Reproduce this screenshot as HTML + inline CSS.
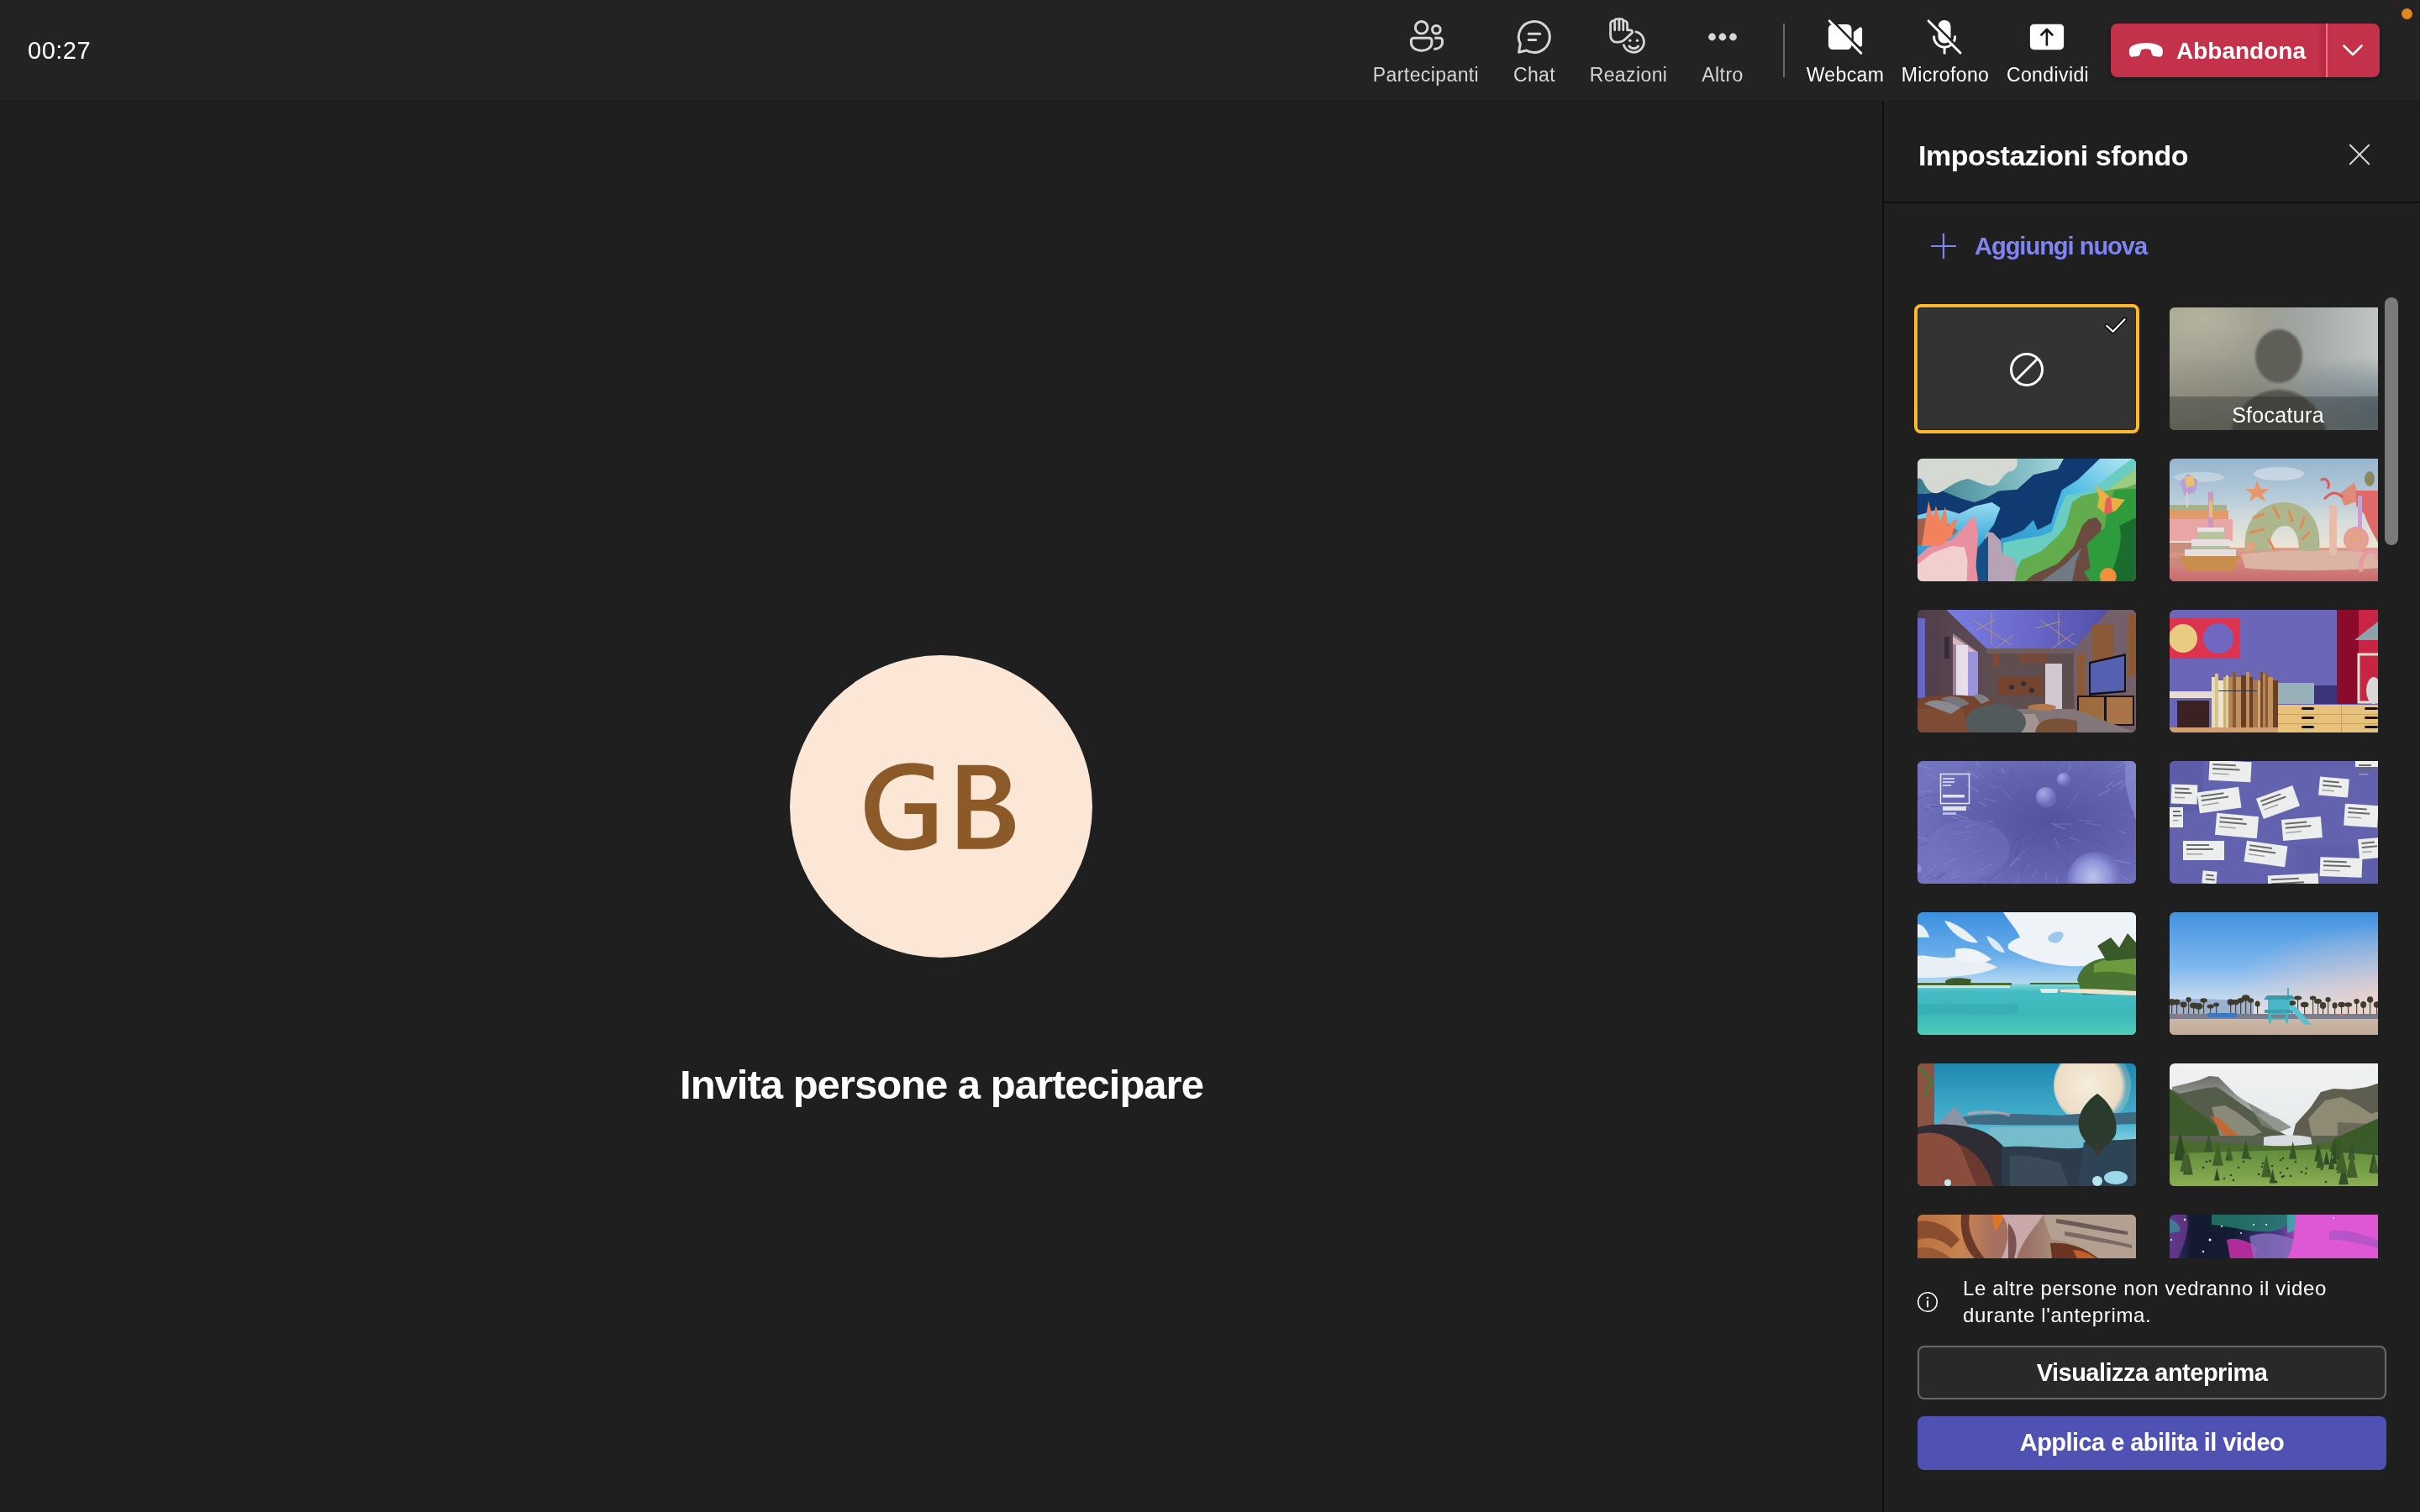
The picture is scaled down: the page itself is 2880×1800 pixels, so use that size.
<!DOCTYPE html>
<html><head><meta charset="utf-8">
<style>
*{margin:0;padding:0;box-sizing:border-box}
html,body{width:2880px;height:1800px;overflow:hidden;background:#1f1f1f;font-family:"Liberation Sans",sans-serif;color:#fff}
.a{position:absolute}
.t{position:absolute;white-space:nowrap;line-height:1;will-change:transform}
#top{left:0;top:0;width:2880px;height:120px;background:#232323;border-bottom:1px solid #1a1a1a;height:121px}
.lbl{font-size:23px;letter-spacing:0.4px;color:#d6d6d6;text-align:center;width:200px;top:77.5px}
.ic{position:absolute}
#panel{left:2240px;top:121px;width:640px;height:1679px;background:#1f1f1f;border-left:2px solid #0e0e0e}
.tile{position:absolute;width:260px;height:146px;border-radius:6px;overflow:hidden}
</style></head><body>
<div id="top" class="a"></div>
<div class="t" id="timer" style="left:33px;top:46px;font-size:29px;letter-spacing:0.5px;color:#fff">00:27</div>

<!-- toolbar labels -->
<div class="t lbl" style="left:1597px;">Partecipanti</div>
<div class="t lbl" style="left:1726px;">Chat</div>
<div class="t lbl" style="left:1838px;">Reazioni</div>
<div class="t lbl" style="left:1950px;">Altro</div>
<div class="a" style="left:2122px;top:28px;width:2px;height:64px;background:#6b6b6b"></div>
<div class="t lbl" style="left:2096px;color:#fff">Webcam</div>
<div class="t lbl" style="left:2215px;color:#fff">Microfono</div>
<div class="t lbl" style="left:2337px;color:#fff">Condividi</div>

<!-- leave button -->
<div class="a" style="left:2512px;top:28px;width:320px;height:64px;background:#c4314b;border-radius:8px;box-shadow:0 2px 6px rgba(0,0,0,.35)"></div>
<div class="a" style="left:2758px;top:28px;width:10px;height:64px;background:linear-gradient(90deg,rgba(0,0,0,0),rgba(0,0,0,.12))"></div><div class="a" style="left:2768px;top:28px;width:2px;height:64px;background:#fd6a80"></div>
<div class="t" style="left:2590px;top:46.5px;font-size:28px;font-weight:bold;color:#fff">Abbandona</div>
<div class="a" style="left:2858px;top:10px;width:13px;height:13px;border-radius:50%;background:#e0861e"></div>

<!-- main -->
<div class="a" style="left:940px;top:780px;width:360px;height:360px;border-radius:50%;background:#fce7d7"></div>
<svg class="a" style="left:1020px;top:900px" width="200" height="120" viewBox="0 0 200 120">
<path fill="#8c5a28" fill-rule="evenodd" d="M90.9 12.4C83 9.5 74 8.3 65 8.3C32 8.3 9.1 29 9.1 60.5C9.1 91 29 112.4 59 112.4C73 112.4 85 109 94.6 103.3V56.2H56.6V69H78.1V94.2C73 97.3 66 98.8 60 98.8C39 98.8 26.4 83 26.4 60.5C26.4 37 42 22.3 65 22.3C75 22.3 84 25 90.9 28.9Z
M119.8 10.7H150C170 10.7 182.6 20 182.6 35C182.6 47 174 55 164 57.5C178 59.5 188 69 188 83C188 100 174 110.7 152 110.7H119.8Z
M135.5 23.1V52H149C159 52 165.3 47 165.3 37.5C165.3 28 159 23.1 149 23.1Z
M135.5 65.3V97.5H152C163 97.5 169.8 92 169.8 81.4C169.8 71 162 65.3 150 65.3Z"/>
</svg>
<div class="t" style="left:720px;top:1266.8px;width:801px;text-align:center;font-size:49px;letter-spacing:-1px;font-weight:bold">Invita persone a partecipare</div>

<!-- panel -->
<div id="panel" class="a"></div>
<div class="a" style="left:2240px;top:240px;width:640px;height:2px;background:#0e0e0e"></div>
<div class="t" style="left:2283px;top:167.5px;font-size:34px;letter-spacing:-0.5px;font-weight:bold">Impostazioni sfondo</div>
<div class="t" style="left:2350px;top:279.4px;font-size:29px;letter-spacing:-1px;font-weight:bold;color:#7f85f5">Aggiungi nuova</div>

<div class="a" style="left:2270px;top:340px;width:560px;height:1158px;overflow:hidden">
<!-- selected none tile -->
<div class="a" style="left:8px;top:22px;width:268px;height:154px;border:4px solid #fcb92c;border-radius:8px;background:#333;box-shadow:inset 0 0 0 1px #222633"></div>
<!-- Sfocatura -->
<div class="tile" style="left:312px;top:26px">
<svg width="260" height="146" viewBox="0 0 260 146" preserveAspectRatio="none">
<defs>
<linearGradient id="bl1" x1="0" y1="0" x2="1" y2="0"><stop offset="0" stop-color="#a6a392"/><stop offset=".4" stop-color="#9a9b8e"/><stop offset=".65" stop-color="#a2a9a8"/><stop offset="1" stop-color="#c6cac6"/></linearGradient>
<linearGradient id="bl2" x1="0" y1="0" x2="0" y2="1"><stop offset="0" stop-color="#000" stop-opacity="0"/><stop offset=".4" stop-color="#000" stop-opacity="0"/><stop offset="1" stop-color="#283020" stop-opacity=".3"/></linearGradient>
<radialGradient id="bl3" cx=".95" cy=".85" r=".45"><stop offset="0" stop-color="#7890a0" stop-opacity=".85"/><stop offset="1" stop-color="#7890a0" stop-opacity="0"/></radialGradient>
<radialGradient id="bl4" cx=".15" cy=".1" r=".35"><stop offset="0" stop-color="#b8b4a2" stop-opacity=".9"/><stop offset="1" stop-color="#b8b4a2" stop-opacity="0"/></radialGradient>
<filter id="bf" x="-20%" y="-20%" width="140%" height="140%"><feGaussianBlur stdDeviation="1.6"/></filter>
</defs>
<rect width="260" height="146" fill="url(#bl1)"/>
<rect width="260" height="146" fill="url(#bl4)"/>
<rect width="260" height="146" fill="url(#bl3)"/>
<rect width="260" height="146" fill="url(#bl2)"/>
<g filter="url(#bf)">
<ellipse cx="130" cy="58" rx="28" ry="32" fill="#5e5f58"/>
<ellipse cx="130" cy="158" rx="57" ry="60" fill="#56564f"/>
</g>
<rect y="106" width="260" height="40" fill="#1a1c1c" fill-opacity=".32"/>
</svg>
<div class="t" style="left:-1px;top:115.6px;width:260px;text-align:center;font-size:25px;letter-spacing:0.3px;color:#fff">Sfocatura</div>
</div>

<!-- A: nature illustration -->
<div class="tile" style="left:12px;top:206px">
<svg width="260" height="146" viewBox="0 0 260 146">
<defs>
<linearGradient id="ta1" x1="0" y1="0" x2="1" y2="0"><stop offset="0" stop-color="#3a7c8c"/><stop offset=".5" stop-color="#6aaab4"/><stop offset="1" stop-color="#a6d6dc"/></linearGradient>
<linearGradient id="ta2" x1="0" y1="1" x2="1" y2="0"><stop offset="0" stop-color="#2a90c8"/><stop offset=".6" stop-color="#48b8e4"/><stop offset="1" stop-color="#b8e8f2"/></linearGradient>
<linearGradient id="ta3" x1="0" y1="0" x2="0" y2="1"><stop offset="0" stop-color="#98dcf0"/><stop offset=".5" stop-color="#3aa8dc"/><stop offset="1" stop-color="#1a6aa0"/></linearGradient>
</defs>
<rect width="260" height="146" fill="#0f3a72"/>
<path d="M0 0H174L167 12.6L138 19.3L118.6 36.7L96.4 38.6L80.8 47.5L67.4 52L51.8 47.5L29.5 38.6L10.5 42L0 42Z" fill="url(#ta1)"/>
<path d="M0 0H118C120 6 118 13 112 15C104 16 102 22 97 28C92 33 86 33 80 31C74 30 68 26 60 24C52 25 46 28 38 33C30 38 26 42 20 41C14 40 10 34 7 28C5 24 2 22 0 24Z" fill="#d5d9d4"/>
<path d="M217 0L191 25L171.7 37.6L164 60L159 77L142.8 85L138 73L126 85L109 92.7L99 95L99 146H260V0Z" fill="url(#ta2)"/>
<path d="M255 0L205.5 38L176.6 43.5L167 65L160 87L147.6 91.8L118.6 96.6L102 100L100 146H260V0Z" fill="#6acdc2"/>
<path d="M260 12L225 38L196 44L184 52L176.6 80L167 92L147.6 110L123.5 120.7L113.8 140L112.8 146H260Z" fill="#62ac4e"/>
<path d="M260 12L225 38L250 34L260 30Z" fill="#9ccc84"/>
<path d="M219 78L213 70L203.6 72L196 80L186 105L167 125L138 138L128 146H214L213 120L217 100Z" fill="#6b4a3f"/>
<path d="M195 106L176.6 125L147.6 146H184L189 122Z" fill="#6f7a82"/>
<path d="M234.5 37L225 65L223 82L201.7 101L205.5 130L198 135L205.5 146H260V36Z" fill="#2e9c3c"/>
<path d="M240 80L260 70V146H228C236 120 246 100 240 80Z" fill="#1c6c2e"/>
<path d="M212 32L230 46L247 49L236 62L224 66L214 58L216 46Z" fill="#e8b03e"/>
<path d="M224 48L230 44L232 64L222 66Z" fill="#e2605a"/>
<circle cx="226.8" cy="140" r="10" fill="#f0903a"/>
<path d="M80 87L89.7 88L99.3 98L101 114L113.8 118L118.6 128L115.7 146H80Z" fill="#b6a4b6"/>
<path d="M0 67.6L18.3 62L35 61L49.5 65.4L68.5 56.5L88.6 52L98.6 58.7L90.8 78.5L80.8 92L76.3 105.5L74 122L65 146H0Z" fill="url(#ta3)"/>
<path d="M70 108L84 92L84 146H66Z" fill="#164e86"/>
<path d="M0 72L20 70L40 80L48 86L30 100L0 104Z" fill="#a06050"/>
<path d="M0 116.7L12.7 105.5L40.6 96.6L54 83L63 70.9L69.6 69.8L72 94.4L69.6 127.8L72 146H0Z" fill="#e8909f"/>
<path d="M0 125.6L18.3 112L40.6 104L56 105.5L59.6 122L58.5 146H0Z" fill="#f1cfcf"/>
<path d="M5 104L9 78L13 50L18 70L22 56L27 74L33 57L36 80L48 70L40 94L26 104Z" fill="#f2825c"/>
</svg>
</div>

<!-- B: candy land -->
<div class="tile" style="left:312px;top:206px">
<svg width="260" height="146" viewBox="0 0 260 146">
<defs><linearGradient id="cb1" x1="0" y1="0" x2="0" y2="1"><stop offset="0" stop-color="#96b6ce"/><stop offset=".3" stop-color="#b4cad8"/><stop offset=".5" stop-color="#d4dcdc"/><stop offset=".72" stop-color="#ece4d4"/><stop offset="1" stop-color="#ece4d4"/></linearGradient>
<linearGradient id="cb2" x1="0" y1="0" x2="0" y2="1"><stop offset="0" stop-color="#dca08e"/><stop offset="1" stop-color="#c86a6e"/></linearGradient></defs>
<rect width="260" height="146" fill="url(#cb1)"/>
<ellipse cx="130" cy="18" rx="30" ry="8" fill="#dce6ec" opacity=".6"/>
<ellipse cx="35" cy="22" rx="30" ry="6" fill="#d0dde6" opacity=".6"/>
<rect y="106" width="260" height="40" fill="url(#cb2)"/>
<path d="M85 114C120 108 200 108 250 112V130C200 134 120 134 90 130Z" fill="#dbb4a4"/>
<rect x="0" y="100" width="40" height="12" fill="#c8907c"/>
<rect x="0" y="118" width="20" height="10" fill="#c88a7a"/>
<rect x="0" y="55" width="68" height="8" fill="#a8b088"/>
<rect x="0" y="62" width="70" height="10" fill="#e49a68"/>
<rect x="0" y="72" width="75" height="26" fill="#e8a6a6"/>
<path d="M12 28L22 18L34 26L30 40L18 44Z" fill="#b8a0d4"/>
<path d="M18 22L28 20L30 32L20 34Z" fill="#e8c070"/>
<rect x="20" y="40" width="2" height="18" fill="#e0d0c0"/>
<rect x="46" y="40" width="6" height="42" fill="#c898c0"/>
<rect x="47" y="50" width="4" height="20" fill="#e8c070"/>
<path d="M33 82H65V98H33Z" fill="#b8c49c"/>
<rect x="33" y="82" width="32" height="5" fill="#ece4e4"/>
<path d="M26 96H72V112H26Z" fill="#e8e0e0"/>
<rect x="26" y="104" width="46" height="8" fill="#b4c09a"/>
<path d="M18 108H79V122H18Z" fill="#e6dede"/>
<rect x="18" y="116" width="61" height="6" fill="#b4c09a"/>
<path d="M12 116H84L76 133H20Z" fill="#c88e4e"/>
<path d="M104 26L108 36L119 36L110 42L114 51L104 45L95 51L98 42L90 36L101 36Z" fill="#e89868"/>
<path d="M90 110C86 75 108 52 136 52C164 52 182 75 178 110H154C154 92 148 80 138 80C126 80 118 92 120 110Z" fill="#adb68c"/>
<g stroke="#e08a58" stroke-width="3" stroke-linecap="round"><path d="M100 70L112 66M96 88L112 84M124 58L130 70M142 62L146 74M160 70L156 82M166 88L158 96M118 96L124 108"/></g>
<rect x="190" y="55" width="9" height="60" fill="#e6bcaa"/>
<path d="M202 42L220 28L226 50L208 56Z" fill="#e08a7a"/>
<path d="M184 48C192 40 198 38 206 46" stroke="#e05a5a" stroke-width="3" fill="none"/>
<path d="M180 26C186 20 192 30 188 36" stroke="#e05a5a" stroke-width="3" fill="none"/>
<ellipse cx="238" cy="24" rx="6" ry="9" fill="#8a8860"/>
<path d="M222 38H248V100C244 92 236 80 232 66L222 56Z" fill="#e06868"/>
<rect x="224" y="44" width="5" height="50" fill="#c8a0d0"/>
<circle cx="222" cy="96" r="15" fill="#e89a9c"/>
<circle cx="222" cy="96" r="10" fill="none" stroke="#d8b070" stroke-width="2"/>
<circle cx="222" cy="96" r="4" fill="#d8b070"/>
<path d="M228 135C226 120 232 110 240 110C246 110 248 116 248 120" stroke="#e89aa0" stroke-width="5" fill="none"/>
<circle cx="96" cy="104" r="5" fill="#e8a080"/>
</svg>
</div>

<!-- C: living room -->
<div class="tile" style="left:12px;top:386px">
<svg width="260" height="146" viewBox="0 0 260 146">
<defs><linearGradient id="lc1" x1="0" y1="0" x2="1" y2="0"><stop offset="0" stop-color="#7a7ce0"/><stop offset=".35" stop-color="#7070d4"/><stop offset="1" stop-color="#5450a8"/></linearGradient>
<linearGradient id="lc2" x1="0" y1="0" x2="1" y2="0"><stop offset="0" stop-color="#4e3e4a"/><stop offset="1" stop-color="#5e4c54"/></linearGradient></defs>
<rect width="260" height="146" fill="#5e4e56"/>
<path d="M34 0H228L186 46H82Z" fill="url(#lc1)"/>
<g stroke="#b89a68" stroke-width="0.9" fill="none"><path d="M66 12L112 42M70 24L92 12M90 48L114 30M88 2V40M146 12L188 42M140 22L170 14M160 46L186 28M168 2V42"/></g>
<path d="M82 46H186V120H82Z" fill="#5e4e50"/>
<path d="M82 46H186V52H82Z" fill="#6e5c5e"/>
<path d="M186 46L228 0H260V146L186 120Z" fill="#74606a"/>
<path d="M0 0H34L82 46V115L0 122Z" fill="url(#lc2)"/>
<rect x="0" y="10" width="9" height="95" fill="#6a66c8"/>
<path d="M42 28L72 50V104H42Z" fill="#9a8294"/>
<path d="M42 32L70 50V56L42 40Z" fill="#d8b8c0"/>
<rect x="46" y="42" width="14" height="62" fill="#e6dee8"/>
<rect x="60" y="50" width="12" height="54" fill="#9a94dc"/>
<rect x="32" y="32" width="6" height="26" fill="#3a2a40"/>
<rect x="90" y="52" width="8" height="16" fill="#7a4a36"/>
<rect x="120" y="52" width="34" height="12" fill="#7a4a36" opacity=".8"/>
<rect x="96" y="80" width="54" height="22" fill="#74442e"/>
<g fill="#2e3038"><circle cx="112" cy="92" r="3"/><circle cx="126" cy="88" r="3"/><circle cx="136" cy="96" r="3"/></g>
<rect x="152" y="64" width="20" height="54" fill="#d2c8d2"/>
<rect x="190" y="52" width="10" height="52" fill="#8a5a38"/>
<rect x="208" y="18" width="26" height="56" fill="#8a5a38"/>
<rect x="250" y="5" width="10" height="75" fill="#8a5a38"/>
<path d="M204 62L248 52V98L204 102Z" fill="#121218"/>
<path d="M206 64L246 55V96L206 99Z" fill="#5660b0"/>
<path d="M190 102H258V138H190Z" fill="#1a1418"/>
<path d="M192 104H222V136H192Z" fill="#9e6a40"/>
<path d="M225 104H256V136H225Z" fill="#a87448"/>
<path d="M82 118H186L260 146H82Z" fill="#827678"/>
<path d="M100 124H140L150 146H100Z" fill="#b8a8a0" opacity=".6"/>
<path d="M0 106C20 100 60 100 90 106V146H0Z" fill="#74442e"/>
<path d="M0 118H55L60 146H0Z" fill="#7e4c34"/>
<path d="M8 112C18 104 36 108 52 116L40 124Z" fill="#8a8a90"/>
<path d="M28 106C40 100 55 104 62 112L50 116Z" fill="#76767c"/>
<path d="M66 102C74 98 82 102 86 108L76 112Z" fill="#808086"/>
<ellipse cx="93" cy="134" rx="36" ry="22" fill="#525a5c"/>
<path d="M140 146C142 130 160 126 190 132V146Z" fill="#7a5238"/>
<ellipse cx="148" cy="116" rx="17" ry="4" fill="#b27a48"/>
</svg>
</div>

<!-- D: purple/red room -->
<div class="tile" style="left:312px;top:386px">
<svg width="260" height="146" viewBox="0 0 260 146">
<rect width="260" height="146" fill="#6c66b8"/>
<rect x="0" y="10" width="84" height="48" fill="#dc3450"/>
<circle cx="16" cy="34" r="17" fill="#e8cc82"/>
<circle cx="58" cy="34" r="18" fill="#7068c0"/>
<rect x="199" y="0" width="61" height="112" fill="#c82444"/>
<rect x="199" y="0" width="26" height="112" fill="#8c0a2c"/>
<path d="M220 36L248 14V36Z" fill="#8aa2aa"/>
<rect x="225" y="53" width="30" height="57" fill="none" stroke="#e8e0d0" stroke-width="3"/>
<ellipse cx="243" cy="96" rx="9" ry="16" fill="#d8d8d8"/>
<rect x="0" y="97" width="55" height="8" fill="#e6dcd2"/>
<rect x="9" y="108" width="38" height="32" fill="#3a2222"/>
<rect x="50" y="86" width="78" height="54" fill="#8a6a48"/>
<rect x="50" y="80" width="4" height="60" fill="#e6dcc4"/>
<rect x="54" y="76" width="4" height="64" fill="#d8c488"/>
<rect x="58" y="84" width="6" height="56" fill="#ece4cc"/>
<rect x="64" y="80" width="3" height="60" fill="#c8b078"/>
<rect x="67" y="78" width="3" height="62" fill="#e0d0a0"/>
<rect x="70" y="80" width="5" height="60" fill="#b08858"/>
<rect x="75" y="74" width="4" height="66" fill="#8a5a34"/>
<rect x="79" y="80" width="6" height="60" fill="#c09060"/>
<rect x="85" y="78" width="6" height="62" fill="#6a4024"/>
<rect x="91" y="74" width="4" height="66" fill="#c09060"/>
<rect x="95" y="80" width="4" height="60" fill="#6a4024"/>
<rect x="99" y="84" width="6" height="56" fill="#a87848"/>
<rect x="105" y="84" width="3" height="56" fill="#d0a878"/>
<rect x="108" y="74" width="3" height="66" fill="#7a4a2a"/>
<rect x="111" y="76" width="3" height="64" fill="#b08858"/>
<rect x="114" y="76" width="3" height="64" fill="#8a5a34"/>
<rect x="117" y="80" width="6" height="60" fill="#c09060"/>
<rect x="123" y="84" width="6" height="56" fill="#6a4024"/>
<rect x="58" y="96" width="46" height="1" fill="#333"/>
<rect x="129" y="87" width="43" height="25" fill="#98b0b8"/>
<rect x="172" y="90" width="27" height="22" fill="#3a3478"/>
<rect x="129" y="113" width="131" height="33" fill="#e6c27a"/>
<g fill="#1a1208"><rect x="157" y="116" width="15" height="3" rx="1.5"/><rect x="157" y="127" width="15" height="3" rx="1.5"/><rect x="157" y="138" width="15" height="3" rx="1.5"/><rect x="232" y="116" width="16" height="3" rx="1.5"/><rect x="232" y="127" width="16" height="3" rx="1.5"/><rect x="232" y="138" width="16" height="3" rx="1.5"/></g>
<g fill="#c8a060"><rect x="129" y="124" width="131" height="1"/><rect x="129" y="135" width="131" height="1"/><rect x="204" y="113" width="1" height="33"/></g>
<rect x="0" y="140" width="129" height="6" fill="#d2a070"/>
</svg>
</div>

<!-- E: very peri fur -->
<div class="tile" style="left:12px;top:566px">
<svg width="260" height="146" viewBox="0 0 260 146">
<defs>
<radialGradient id="ve1" cx=".6" cy=".5" r=".65"><stop offset="0" stop-color="#5252a2"/><stop offset=".6" stop-color="#6262ae"/><stop offset="1" stop-color="#7274c0"/></radialGradient>
<radialGradient id="ve2" cx=".45" cy=".45" r=".55"><stop offset="0" stop-color="#bcc4ea"/><stop offset=".55" stop-color="#8e94d8"/><stop offset="1" stop-color="#7478c8" stop-opacity="0"/></radialGradient>
<radialGradient id="ve3" cx=".35" cy=".3" r=".6"><stop offset="0" stop-color="#a8aae6"/><stop offset="1" stop-color="#6a6cbc"/></radialGradient>
</defs>
<rect width="260" height="146" fill="url(#ve1)"/>
<g stroke-width="1.2" fill="none">
<path d="M84 22L78 16" stroke="#50509c" stroke-opacity="0.38"/>
<path d="M152 133L154 142" stroke="#9094d8" stroke-opacity="0.37"/>
<path d="M24 62L14 59" stroke="#7c7ec8" stroke-opacity="0.57"/>
<path d="M152 9L152 0" stroke="#7c7ec8" stroke-opacity="0.37"/>
<path d="M223 42L231 36" stroke="#5a5aa6" stroke-opacity="0.55"/>
<path d="M177 15L183 6" stroke="#8a8cd4" stroke-opacity="0.54"/>
<path d="M16 9L-1 5" stroke="#9094d8" stroke-opacity="0.62"/>
<path d="M121 135L118 146" stroke="#7c7ec8" stroke-opacity="0.59"/>
<path d="M63 84L43 87" stroke="#9094d8" stroke-opacity="0.45"/>
<path d="M255 17L271 8" stroke="#7c7ec8" stroke-opacity="0.68"/>
<path d="M110 140L107 156" stroke="#5a5aa6" stroke-opacity="0.47"/>
<path d="M91 73L82 71" stroke="#8a8cd4" stroke-opacity="0.68"/>
<path d="M123 97L116 113" stroke="#50509c" stroke-opacity="0.70"/>
<path d="M214 42L229 33" stroke="#8a8cd4" stroke-opacity="0.68"/>
<path d="M92 89L82 93" stroke="#5a5aa6" stroke-opacity="0.40"/>
<path d="M64 57L56 53" stroke="#9094d8" stroke-opacity="0.49"/>
<path d="M72 20L59 12" stroke="#9094d8" stroke-opacity="0.70"/>
<path d="M178 56L185 50" stroke="#7c7ec8" stroke-opacity="0.43"/>
<path d="M61 71L49 70" stroke="#8a8cd4" stroke-opacity="0.40"/>
<path d="M139 89L135 98" stroke="#50509c" stroke-opacity="0.68"/>
<path d="M170 108L180 125" stroke="#50509c" stroke-opacity="0.49"/>
<path d="M104 15L99 8" stroke="#8a8cd4" stroke-opacity="0.69"/>
<path d="M115 16L110 8" stroke="#50509c" stroke-opacity="0.40"/>
<path d="M26 53L7 58" stroke="#50509c" stroke-opacity="0.48"/>
<path d="M165 139L167 154" stroke="#8a8cd4" stroke-opacity="0.65"/>
<path d="M258 68L267 68" stroke="#8a8cd4" stroke-opacity="0.61"/>
<path d="M192 70L208 72" stroke="#7c7ec8" stroke-opacity="0.68"/>
<path d="M137 21L136 13" stroke="#50509c" stroke-opacity="0.45"/>
<path d="M167 13L175 0" stroke="#7c7ec8" stroke-opacity="0.47"/>
<path d="M58 79L41 81" stroke="#50509c" stroke-opacity="0.63"/>
<path d="M256 124L271 137" stroke="#7c7ec8" stroke-opacity="0.42"/>
<path d="M128 107L113 118" stroke="#9094d8" stroke-opacity="0.44"/>
<path d="M180 140L189 159" stroke="#5a5aa6" stroke-opacity="0.68"/>
<path d="M95 32L85 28" stroke="#7c7ec8" stroke-opacity="0.52"/>
<path d="M256 89L276 85" stroke="#5a5aa6" stroke-opacity="0.63"/>
<path d="M22 96L3 94" stroke="#7c7ec8" stroke-opacity="0.52"/>
<path d="M46 115L30 125" stroke="#9094d8" stroke-opacity="0.51"/>
<path d="M193 12L201 -8" stroke="#8a8cd4" stroke-opacity="0.40"/>
<path d="M235 118L254 122" stroke="#9094d8" stroke-opacity="0.58"/>
<path d="M91 80L84 84" stroke="#8a8cd4" stroke-opacity="0.53"/>
<path d="M243 63L262 68" stroke="#7c7ec8" stroke-opacity="0.36"/>
<path d="M55 73L43 71" stroke="#50509c" stroke-opacity="0.50"/>
<path d="M34 133L22 141" stroke="#50509c" stroke-opacity="0.64"/>
<path d="M134 121L129 129" stroke="#7c7ec8" stroke-opacity="0.53"/>
<path d="M5 64L-3 66" stroke="#7c7ec8" stroke-opacity="0.41"/>
<path d="M123 106L115 116" stroke="#50509c" stroke-opacity="0.54"/>
<path d="M125 113L119 119" stroke="#7c7ec8" stroke-opacity="0.45"/>
<path d="M201 74L219 77" stroke="#8a8cd4" stroke-opacity="0.51"/>
<path d="M159 74L176 81" stroke="#9094d8" stroke-opacity="0.53"/>
<path d="M210 74L225 72" stroke="#5a5aa6" stroke-opacity="0.67"/>
<path d="M232 30L244 23" stroke="#9094d8" stroke-opacity="0.50"/>
<path d="M19 35L2 37" stroke="#8a8cd4" stroke-opacity="0.66"/>
<path d="M40 105L30 106" stroke="#7c7ec8" stroke-opacity="0.69"/>
<path d="M57 139L46 149" stroke="#7c7ec8" stroke-opacity="0.41"/>
<path d="M112 75L102 78" stroke="#5a5aa6" stroke-opacity="0.38"/>
<path d="M95 49L78 44" stroke="#9094d8" stroke-opacity="0.47"/>
<path d="M162 75L184 75" stroke="#7c7ec8" stroke-opacity="0.69"/>
<path d="M27 39L8 41" stroke="#5a5aa6" stroke-opacity="0.61"/>
<path d="M213 124L227 140" stroke="#9094d8" stroke-opacity="0.40"/>
<path d="M239 83L248 86" stroke="#8a8cd4" stroke-opacity="0.63"/>
<path d="M48 131L41 136" stroke="#8a8cd4" stroke-opacity="0.63"/>
<path d="M22 125L7 139" stroke="#9094d8" stroke-opacity="0.35"/>
<path d="M259 61L275 65" stroke="#8a8cd4" stroke-opacity="0.53"/>
<path d="M62 16L54 14" stroke="#7c7ec8" stroke-opacity="0.68"/>
<path d="M163 78L177 81" stroke="#7c7ec8" stroke-opacity="0.44"/>
<path d="M209 145L216 149" stroke="#50509c" stroke-opacity="0.54"/>
<path d="M49 69L40 66" stroke="#9094d8" stroke-opacity="0.58"/>
<path d="M142 130L136 140" stroke="#7c7ec8" stroke-opacity="0.69"/>
<path d="M89 122L75 130" stroke="#9094d8" stroke-opacity="0.70"/>
<path d="M255 122L272 123" stroke="#5a5aa6" stroke-opacity="0.50"/>
<path d="M14 97L-0 101" stroke="#5a5aa6" stroke-opacity="0.56"/>
<path d="M180 7L182 -5" stroke="#8a8cd4" stroke-opacity="0.44"/>
<path d="M250 142L259 149" stroke="#5a5aa6" stroke-opacity="0.43"/>
<path d="M48 49L36 51" stroke="#7c7ec8" stroke-opacity="0.44"/>
<path d="M202 13L210 8" stroke="#50509c" stroke-opacity="0.36"/>
<path d="M6 44L-10 45" stroke="#50509c" stroke-opacity="0.65"/>
<path d="M40 130L25 135" stroke="#5a5aa6" stroke-opacity="0.60"/>
<path d="M128 41L123 33" stroke="#50509c" stroke-opacity="0.57"/>
<path d="M191 119L204 127" stroke="#50509c" stroke-opacity="0.55"/>
<path d="M211 2L226 -10" stroke="#7c7ec8" stroke-opacity="0.38"/>
<path d="M11 93L-2 90" stroke="#9094d8" stroke-opacity="0.55"/>
<path d="M163 91L169 105" stroke="#8a8cd4" stroke-opacity="0.51"/>
<path d="M18 136L9 138" stroke="#50509c" stroke-opacity="0.37"/>
<path d="M192 37L198 27" stroke="#7c7ec8" stroke-opacity="0.43"/>
<path d="M169 67L178 68" stroke="#5a5aa6" stroke-opacity="0.62"/>
<path d="M160 94L167 101" stroke="#5a5aa6" stroke-opacity="0.58"/>
<path d="M180 91L194 95" stroke="#9094d8" stroke-opacity="0.44"/>
<path d="M175 101L181 111" stroke="#50509c" stroke-opacity="0.45"/>
<path d="M121 112L108 121" stroke="#5a5aa6" stroke-opacity="0.69"/>
<path d="M243 3L259 -9" stroke="#9094d8" stroke-opacity="0.70"/>
<path d="M101 134L93 139" stroke="#8a8cd4" stroke-opacity="0.40"/>
<path d="M136 139L138 158" stroke="#50509c" stroke-opacity="0.45"/>
<path d="M29 53L9 51" stroke="#9094d8" stroke-opacity="0.36"/>
<path d="M1 72L-11 72" stroke="#7c7ec8" stroke-opacity="0.50"/>
<path d="M98 18L88 10" stroke="#5a5aa6" stroke-opacity="0.64"/>
<path d="M31 135L12 142" stroke="#5a5aa6" stroke-opacity="0.44"/>
<path d="M17 57L9 53" stroke="#9094d8" stroke-opacity="0.61"/>
<path d="M222 41L235 29" stroke="#7c7ec8" stroke-opacity="0.44"/>
<path d="M69 75L56 79" stroke="#9094d8" stroke-opacity="0.66"/>
<path d="M211 92L228 105" stroke="#50509c" stroke-opacity="0.42"/>
<path d="M21 136L7 145" stroke="#7c7ec8" stroke-opacity="0.58"/>
<path d="M74 7L69 -1" stroke="#9094d8" stroke-opacity="0.50"/>
<path d="M73 37L59 28" stroke="#9094d8" stroke-opacity="0.58"/>
<path d="M78 81L68 84" stroke="#7c7ec8" stroke-opacity="0.38"/>
<path d="M130 119L124 132" stroke="#5a5aa6" stroke-opacity="0.70"/>
<path d="M117 20L110 14" stroke="#5a5aa6" stroke-opacity="0.54"/>
<path d="M83 54L73 49" stroke="#8a8cd4" stroke-opacity="0.61"/>
<path d="M107 60L94 57" stroke="#5a5aa6" stroke-opacity="0.61"/>
<path d="M130 84L116 95" stroke="#50509c" stroke-opacity="0.57"/>
<path d="M224 32L233 24" stroke="#9094d8" stroke-opacity="0.58"/>
<path d="M112 46L98 30" stroke="#7c7ec8" stroke-opacity="0.36"/>
<path d="M184 131L193 145" stroke="#8a8cd4" stroke-opacity="0.38"/>
<path d="M242 136L254 144" stroke="#9094d8" stroke-opacity="0.44"/>
<path d="M28 23L12 16" stroke="#9094d8" stroke-opacity="0.38"/>
<path d="M202 0L207 -15" stroke="#8a8cd4" stroke-opacity="0.58"/>
<path d="M79 19L64 12" stroke="#8a8cd4" stroke-opacity="0.38"/>
<path d="M78 138L72 148" stroke="#50509c" stroke-opacity="0.35"/>
<path d="M140 145L140 158" stroke="#7c7ec8" stroke-opacity="0.52"/>
<path d="M61 36L48 24" stroke="#5a5aa6" stroke-opacity="0.37"/>
<path d="M50 129L42 133" stroke="#7c7ec8" stroke-opacity="0.58"/>
<path d="M241 33L250 24" stroke="#9094d8" stroke-opacity="0.48"/>
<path d="M103 1L89 -13" stroke="#8a8cd4" stroke-opacity="0.42"/>
<path d="M252 46L263 46" stroke="#7c7ec8" stroke-opacity="0.44"/>
<path d="M231 16L246 8" stroke="#7c7ec8" stroke-opacity="0.52"/>
<path d="M237 8L255 -3" stroke="#8a8cd4" stroke-opacity="0.42"/>
<path d="M253 21L259 14" stroke="#9094d8" stroke-opacity="0.51"/>
<path d="M185 46L191 39" stroke="#7c7ec8" stroke-opacity="0.47"/>
<path d="M48 137L40 140" stroke="#9094d8" stroke-opacity="0.64"/>
<path d="M256 65L265 61" stroke="#8a8cd4" stroke-opacity="0.47"/>
<path d="M248 18L259 17" stroke="#5a5aa6" stroke-opacity="0.62"/>
<path d="M80 117L70 132" stroke="#7c7ec8" stroke-opacity="0.48"/>
<path d="M239 28L257 17" stroke="#8a8cd4" stroke-opacity="0.57"/>
<path d="M64 91L52 95" stroke="#9094d8" stroke-opacity="0.37"/>
<path d="M239 38L260 34" stroke="#5a5aa6" stroke-opacity="0.48"/>
<path d="M87 139L80 156" stroke="#5a5aa6" stroke-opacity="0.67"/>
<path d="M77 105L59 112" stroke="#8a8cd4" stroke-opacity="0.36"/>
<path d="M61 69L41 62" stroke="#9094d8" stroke-opacity="0.63"/>
<path d="M238 119L252 122" stroke="#8a8cd4" stroke-opacity="0.63"/>
<path d="M192 120L200 135" stroke="#5a5aa6" stroke-opacity="0.65"/>
<path d="M120 114L110 126" stroke="#9094d8" stroke-opacity="0.61"/>
</g>
<ellipse cx="60" cy="105" rx="50" ry="35" fill="#7a7cc8" opacity=".35"/>
<circle cx="212" cy="142" r="34" fill="url(#ve2)"/>
<circle cx="153" cy="43" r="12" fill="url(#ve3)"/>
<circle cx="174" cy="22" r="8" fill="url(#ve3)"/>
<circle cx="0" cy="128" r="5" fill="#8a8ede"/>
<rect x="27.5" y="15.5" width="34" height="35" fill="none" stroke="#e6e8f6" stroke-width="1.5"/>
<g fill="#c8cbee"><rect x="30" y="20" width="14" height="2"/><rect x="30" y="24" width="14" height="2"/><rect x="30" y="28" width="10" height="2"/></g>
<rect x="30" y="40" width="26" height="3.5" fill="#e0e2f4"/>
<rect x="30" y="54" width="28" height="5" fill="#e0e2f4"/>
<rect x="30" y="61" width="16" height="3" fill="#b8bae6"/>
<path d="M248 0H260V70C252 50 244 25 248 0Z" fill="#8a8ed4" opacity=".7"/>
</svg>
</div>

<!-- F: pantone cards -->
<div class="tile" style="left:312px;top:566px">
<svg width="260" height="146" viewBox="0 0 260 146">
<rect width="260" height="146" fill="#6262ae"/>
<path d="M0 0H40V60H0Z" fill="#5c5ca8"/><path d="M150 100H260V146H150Z" fill="#5e5eaa"/>
<g transform="rotate(3 72.0 12.0)"><rect x="47" y="0" width="50" height="24" fill="#eceeee"/><rect x="51" y="4" width="27.5" height="2" fill="#6a6a6a"/><rect x="51" y="9" width="32.5" height="2" fill="#6a6a6a"/><rect x="51" y="15" width="20.0" height="1.5" fill="#a0a0a0"/></g>
<g transform="rotate(2 17.5 39.5)"><rect x="2" y="28" width="31" height="23" fill="#eceeee"/><rect x="6" y="32" width="17.1" height="2" fill="#6a6a6a"/><rect x="6" y="37" width="20.2" height="2" fill="#6a6a6a"/><rect x="6" y="43" width="12.4" height="1.5" fill="#a0a0a0"/></g>
<g transform="rotate(-8 59.0 46.5)"><rect x="34" y="34" width="50" height="25" fill="#eceeee"/><rect x="38" y="38" width="27.5" height="2" fill="#6a6a6a"/><rect x="38" y="43" width="32.5" height="2" fill="#6a6a6a"/><rect x="38" y="49" width="20.0" height="1.5" fill="#a0a0a0"/></g>
<g transform="rotate(-20 129.0 49.0)"><rect x="106" y="36" width="46" height="26" fill="#eceeee"/><rect x="110" y="40" width="25.3" height="2" fill="#6a6a6a"/><rect x="110" y="45" width="29.9" height="2" fill="#6a6a6a"/><rect x="110" y="51" width="18.4" height="1.5" fill="#a0a0a0"/></g>
<g transform="rotate(0 8.0 67.0)"><rect x="0" y="55" width="16" height="24" fill="#eceeee"/><rect x="4" y="59" width="8.8" height="2" fill="#6a6a6a"/><rect x="4" y="64" width="10.4" height="2" fill="#6a6a6a"/><rect x="4" y="70" width="6.4" height="1.5" fill="#a0a0a0"/></g>
<g transform="rotate(5 80.0 77.0)"><rect x="55" y="64" width="50" height="26" fill="#eceeee"/><rect x="59" y="68" width="27.5" height="2" fill="#6a6a6a"/><rect x="59" y="73" width="32.5" height="2" fill="#6a6a6a"/><rect x="59" y="79" width="20.0" height="1.5" fill="#a0a0a0"/></g>
<g transform="rotate(-5 157.5 80.5)"><rect x="134" y="68" width="47" height="25" fill="#eceeee"/><rect x="138" y="72" width="25.9" height="2" fill="#6a6a6a"/><rect x="138" y="77" width="30.6" height="2" fill="#6a6a6a"/><rect x="138" y="83" width="18.8" height="1.5" fill="#a0a0a0"/></g>
<g transform="rotate(5 195.5 31.0)"><rect x="178" y="20" width="35" height="22" fill="#eceeee"/><rect x="182" y="24" width="19.2" height="2" fill="#6a6a6a"/><rect x="182" y="29" width="22.8" height="2" fill="#6a6a6a"/><rect x="182" y="35" width="14.0" height="1.5" fill="#a0a0a0"/></g>
<g transform="rotate(4 228.0 65.0)"><rect x="208" y="52" width="40" height="26" fill="#eceeee"/><rect x="212" y="56" width="22.0" height="2" fill="#6a6a6a"/><rect x="212" y="61" width="26.0" height="2" fill="#6a6a6a"/><rect x="212" y="67" width="16.0" height="1.5" fill="#a0a0a0"/></g>
<g transform="rotate(0 40.5 106.5)"><rect x="16" y="95" width="49" height="23" fill="#eceeee"/><rect x="20" y="99" width="27.0" height="2" fill="#6a6a6a"/><rect x="20" y="104" width="31.9" height="2" fill="#6a6a6a"/><rect x="20" y="110" width="19.6" height="1.5" fill="#a0a0a0"/></g>
<g transform="rotate(8 114.5 110.5)"><rect x="90" y="98" width="49" height="25" fill="#eceeee"/><rect x="94" y="102" width="27.0" height="2" fill="#6a6a6a"/><rect x="94" y="107" width="31.9" height="2" fill="#6a6a6a"/><rect x="94" y="113" width="19.6" height="1.5" fill="#a0a0a0"/></g>
<g transform="rotate(-5 239.0 104.0)"><rect x="225" y="92" width="28" height="24" fill="#eceeee"/><rect x="229" y="96" width="15.4" height="2" fill="#6a6a6a"/><rect x="229" y="101" width="18.2" height="2" fill="#6a6a6a"/><rect x="229" y="107" width="11.2" height="1.5" fill="#a0a0a0"/></g>
<g transform="rotate(2 204.0 126.5)"><rect x="179" y="115" width="50" height="23" fill="#eceeee"/><rect x="183" y="119" width="27.5" height="2" fill="#6a6a6a"/><rect x="183" y="124" width="32.5" height="2" fill="#6a6a6a"/><rect x="183" y="130" width="20.0" height="1.5" fill="#a0a0a0"/></g>
<g transform="rotate(5 47.5 138.5)"><rect x="39" y="131" width="17" height="15" fill="#eceeee"/><rect x="43" y="135" width="9.4" height="2" fill="#6a6a6a"/><rect x="43" y="140" width="11.1" height="2" fill="#6a6a6a"/><rect x="43" y="146" width="6.8" height="1.5" fill="#a0a0a0"/></g>
<g transform="rotate(-3 147.0 142.0)"><rect x="117" y="135" width="60" height="14" fill="#eceeee"/><rect x="121" y="139" width="33.0" height="2" fill="#6a6a6a"/><rect x="121" y="144" width="39.0" height="2" fill="#6a6a6a"/><rect x="121" y="150" width="24.0" height="1.5" fill="#a0a0a0"/></g>
<g transform="rotate(0 234.5 3.5)"><rect x="221" y="0" width="27" height="7" fill="#eceeee"/><rect x="225" y="4" width="14.9" height="2" fill="#6a6a6a"/><rect x="225" y="9" width="17.6" height="2" fill="#6a6a6a"/><rect x="225" y="15" width="10.8" height="1.5" fill="#a0a0a0"/></g>
</svg>
</div>

<!-- G: tropical beach -->
<div class="tile" style="left:12px;top:746px">
<svg width="260" height="146" viewBox="0 0 260 146">
<defs>
<linearGradient id="bg1" x1="0" y1="0" x2="0" y2="1"><stop offset="0" stop-color="#3c90e0"/><stop offset=".35" stop-color="#6aaeea"/><stop offset=".58" stop-color="#b4d8f2"/></linearGradient>
<linearGradient id="bg2" x1="0" y1="0" x2="0" y2="1"><stop offset="0" stop-color="#8ad8d8"/><stop offset=".15" stop-color="#44bcc4"/><stop offset=".6" stop-color="#3cb8b8"/><stop offset="1" stop-color="#50ccbc"/></linearGradient>
</defs>
<rect width="260" height="146" fill="url(#bg1)"/>
<path d="M102 0H260V40C240 55 215 66 180 64C150 62 130 55 110 45C104 40 110 34 122 30C118 20 108 10 102 0Z" fill="#eef3f7"/>
<path d="M160 25C170 20 180 24 168 36C158 38 150 32 160 25Z" fill="#9cc8ee"/>
<path d="M0 52C10 50 25 56 40 54C55 50 80 58 95 65C80 75 40 78 0 78Z" fill="#e8f0f6"/>
<path d="M45 44C60 40 75 45 88 56C80 62 60 60 45 56Z" fill="#eef4f8"/>
<path d="M32 10C45 12 62 24 72 36C60 38 42 28 32 10Z" fill="#eaf2f8"/>
<path d="M0 14C6 14 12 22 14 30L0 30Z" fill="#e6eef6"/>
<path d="M82 28C90 30 100 38 104 48C94 48 86 40 82 28Z" fill="#dde9f4"/>
<rect y="85" width="260" height="61" fill="url(#bg2)"/>
<path d="M0 84H112V87H0Z" fill="#4a6a3a"/>
<path d="M134 84H196V86H134Z" fill="#4a6a3a"/>
<path d="M33 82C36 78 50 77 64 80L62 88H34Z" fill="#3c5a28"/>
<path d="M0 87H110V90H0Z" fill="#cce8e4"/>
<path d="M190 80C194 65 205 58 220 55C235 52 250 50 260 44V98H196Z" fill="#4a7230"/>
<path d="M210 62C220 56 235 54 250 52L260 55V75C240 70 225 70 210 72Z" fill="#6e9a3e"/>
<path d="M214 40L230 30L240 42L250 25L260 36V55L225 58Z" fill="#3a5a2a"/>
<path d="M170 92C200 90 230 92 260 94V99C230 98 200 97 170 95Z" fill="#ece4d0"/>
<path d="M145 91H168L166 96H148Z" fill="#e6ece8"/>
<path d="M0 110C40 106 80 112 120 108L120 120C80 124 40 118 0 122Z" fill="#34a8b4" opacity=".5"/>
</svg>
</div>

<!-- H: lifeguard beach -->
<div class="tile" style="left:312px;top:746px">
<svg width="260" height="146" viewBox="0 0 260 146">
<defs><linearGradient id="lh1" x1="0" y1="0" x2="0" y2="1"><stop offset="0" stop-color="#4292e0"/><stop offset=".45" stop-color="#80b8ee"/><stop offset=".72" stop-color="#c8dcee"/><stop offset=".86" stop-color="#e0e4ea"/></linearGradient>
<linearGradient id="lh2" x1="0" y1="0" x2="1" y2="0"><stop offset="0" stop-color="#fff" stop-opacity="0"/><stop offset=".55" stop-color="#f4dcd4" stop-opacity=".15"/><stop offset="1" stop-color="#f4c8bc" stop-opacity=".75"/></linearGradient>
<radialGradient id="lh2r" cx="1" cy=".85" r=".75"><stop offset="0" stop-color="#f6ccc0" stop-opacity=".8"/><stop offset="1" stop-color="#f6ccc0" stop-opacity="0"/></radialGradient>
<linearGradient id="lh3" x1="0" y1="0" x2="0" y2="1"><stop offset="0" stop-color="#ccb8a8"/><stop offset="1" stop-color="#c0a898"/></linearGradient></defs>
<rect width="260" height="146" fill="url(#lh1)"/>
<rect width="260" height="127" fill="url(#lh2r)"/>
<path d="M0 106C20 102 50 103 100 106V122H0Z" fill="#8ea4cc" opacity=".8"/>
<rect x="2" y="107" width="1.2" height="17" fill="#4a4a3a"/>
<ellipse cx="2.6" cy="107" rx="4.1" ry="3.9" fill="#3e3c2e"/>
<rect x="8" y="107" width="1.2" height="17" fill="#4a4a3a"/>
<ellipse cx="8.6" cy="107" rx="4.0" ry="3.4" fill="#3e3c2e"/>
<rect x="16" y="110" width="1.2" height="14" fill="#4a4a3a"/>
<ellipse cx="16.6" cy="110" rx="4.0" ry="3.4" fill="#3e3c2e"/>
<rect x="22" y="104" width="1.2" height="20" fill="#4a4a3a"/>
<ellipse cx="22.6" cy="104" rx="3.2" ry="3.0" fill="#3e3c2e"/>
<rect x="28" y="111" width="1.2" height="13" fill="#4a4a3a"/>
<ellipse cx="28.6" cy="111" rx="4.6" ry="3.5" fill="#3e3c2e"/>
<rect x="34" y="112" width="1.2" height="12" fill="#4a4a3a"/>
<ellipse cx="34.6" cy="112" rx="5.0" ry="3.9" fill="#3e3c2e"/>
<rect x="40" y="105" width="1.2" height="19" fill="#4a4a3a"/>
<ellipse cx="40.6" cy="105" rx="4.2" ry="2.7" fill="#3e3c2e"/>
<rect x="48" y="112" width="1.2" height="12" fill="#4a4a3a"/>
<ellipse cx="48.6" cy="112" rx="4.1" ry="2.6" fill="#3e3c2e"/>
<rect x="55" y="110" width="1.2" height="14" fill="#4a4a3a"/>
<ellipse cx="55.6" cy="110" rx="3.5" ry="2.5" fill="#3e3c2e"/>
<rect x="72" y="107" width="1.2" height="17" fill="#4a4a3a"/>
<ellipse cx="72.6" cy="107" rx="3.9" ry="3.8" fill="#3e3c2e"/>
<rect x="78" y="107" width="1.2" height="17" fill="#4a4a3a"/>
<ellipse cx="78.6" cy="107" rx="4.3" ry="3.2" fill="#3e3c2e"/>
<rect x="84" y="105" width="1.2" height="19" fill="#4a4a3a"/>
<ellipse cx="84.6" cy="105" rx="3.9" ry="2.9" fill="#3e3c2e"/>
<rect x="90" y="102" width="1.2" height="22" fill="#4a4a3a"/>
<ellipse cx="90.6" cy="102" rx="5.0" ry="3.8" fill="#3e3c2e"/>
<rect x="96" y="105" width="1.2" height="19" fill="#4a4a3a"/>
<ellipse cx="96.6" cy="105" rx="3.6" ry="2.8" fill="#3e3c2e"/>
<rect x="104" y="109" width="1.2" height="15" fill="#4a4a3a"/>
<ellipse cx="104.6" cy="109" rx="3.1" ry="3.6" fill="#3e3c2e"/>
<rect x="145" y="108" width="1.2" height="16" fill="#4a4a3a"/>
<ellipse cx="145.6" cy="108" rx="4.7" ry="3.1" fill="#3e3c2e"/>
<rect x="152" y="102" width="1.2" height="22" fill="#4a4a3a"/>
<ellipse cx="152.6" cy="102" rx="4.7" ry="2.5" fill="#3e3c2e"/>
<rect x="160" y="110" width="1.2" height="14" fill="#4a4a3a"/>
<ellipse cx="160.6" cy="110" rx="4.8" ry="3.2" fill="#3e3c2e"/>
<rect x="170" y="102" width="1.2" height="22" fill="#4a4a3a"/>
<ellipse cx="170.6" cy="102" rx="3.8" ry="2.6" fill="#3e3c2e"/>
<rect x="176" y="106" width="1.2" height="18" fill="#4a4a3a"/>
<ellipse cx="176.6" cy="106" rx="4.6" ry="2.9" fill="#3e3c2e"/>
<rect x="182" y="111" width="1.2" height="13" fill="#4a4a3a"/>
<ellipse cx="182.6" cy="111" rx="3.7" ry="3.9" fill="#3e3c2e"/>
<rect x="188" y="104" width="1.2" height="20" fill="#4a4a3a"/>
<ellipse cx="188.6" cy="104" rx="3.2" ry="2.9" fill="#3e3c2e"/>
<rect x="196" y="111" width="1.2" height="13" fill="#4a4a3a"/>
<ellipse cx="196.6" cy="111" rx="3.1" ry="3.7" fill="#3e3c2e"/>
<rect x="204" y="110" width="1.2" height="14" fill="#4a4a3a"/>
<ellipse cx="204.6" cy="110" rx="4.1" ry="3.2" fill="#3e3c2e"/>
<rect x="212" y="110" width="1.2" height="14" fill="#4a4a3a"/>
<ellipse cx="212.6" cy="110" rx="4.5" ry="2.7" fill="#3e3c2e"/>
<rect x="222" y="106" width="1.2" height="18" fill="#4a4a3a"/>
<ellipse cx="222.6" cy="106" rx="3.2" ry="3.1" fill="#3e3c2e"/>
<rect x="230" y="110" width="1.2" height="14" fill="#4a4a3a"/>
<ellipse cx="230.6" cy="110" rx="3.5" ry="4.0" fill="#3e3c2e"/>
<rect x="238" y="104" width="1.2" height="20" fill="#4a4a3a"/>
<ellipse cx="238.6" cy="104" rx="3.6" ry="3.8" fill="#3e3c2e"/>
<rect x="246" y="110" width="1.2" height="14" fill="#4a4a3a"/>
<ellipse cx="246.6" cy="110" rx="3.8" ry="3.8" fill="#3e3c2e"/>
<rect x="252" y="106" width="1.2" height="18" fill="#4a4a3a"/>
<ellipse cx="252.6" cy="106" rx="3.2" ry="4.0" fill="#3e3c2e"/>
<rect y="121" width="260" height="6" fill="#7a7e8c"/>
<g fill="#c86a6a" opacity=".7"><rect x="8" y="121" width="10" height="3"/><rect x="200" y="121" width="8" height="3"/></g>
<rect x="45" y="120" width="35" height="5" fill="#3a78c0"/>
<rect y="127" width="260" height="19" fill="url(#lh3)"/>
<rect x="140" y="90" width="2" height="12" fill="#50b0c0"/>
<path d="M112 104H150L146 99H116Z" fill="#3a9aa8"/>
<rect x="117" y="104" width="26" height="18" fill="#48b6c6"/>
<rect x="113" y="116" width="34" height="4" fill="#3aa0b0"/>
<path d="M141 112L150 112L169 134L160 134Z" fill="#58c0d0"/>
<rect x="118" y="120" width="3" height="12" fill="#48b4c4"/><rect x="138" y="120" width="3" height="12" fill="#48b4c4"/>
<path d="M116 126H142V128H116Z" fill="#48b4c4"/>
</svg>
</div>

<!-- I: sci-fi planet -->
<div class="tile" style="left:12px;top:926px">
<svg width="260" height="146" viewBox="0 0 260 146">
<defs><linearGradient id="si1" x1="0" y1="0" x2="0" y2="1"><stop offset="0" stop-color="#1e88b0"/><stop offset=".5" stop-color="#48b4d0"/><stop offset=".7" stop-color="#a8dce8"/></linearGradient>
<radialGradient id="si2" cx=".45" cy=".5" r=".5"><stop offset="0" stop-color="#f6eede"/><stop offset=".85" stop-color="#ecdcc4"/><stop offset="1" stop-color="#e0d4c0" stop-opacity=".3"/></radialGradient></defs>
<rect width="260" height="146" fill="url(#si1)"/>
<circle cx="208" cy="26" r="46" fill="url(#si2)"/>
<path d="M52 64C90 58 130 60 170 62C200 58 230 60 260 58V72C200 74 120 74 52 72Z" fill="#3e6a84"/>
<path d="M60 60C80 56 100 58 110 62" stroke="#e0a0a0" stroke-width="3" fill="none" opacity=".7"/>
<path d="M21 75L44 51L62 75Z" fill="#8a94a4"/>
<rect x="86" y="76" width="150" height="26" fill="#76bccc"/>
<path d="M0 0H20V80H0Z" fill="#8a5444"/>
<path d="M2 5L16 20L8 40" stroke="#4a7a3a" stroke-width="3" fill="none"/>
<path d="M0 76C20 70 50 72 70 78C90 84 100 96 110 108L120 146H0Z" fill="#2e2c34"/>
<path d="M0 84C18 80 35 84 48 95C60 110 70 130 76 146H0Z" fill="#8a4c3c"/>
<path d="M50 96C60 100 80 112 90 146H70Z" fill="#6a3a30"/>
<path d="M100 100C130 96 170 104 200 100C220 96 245 92 260 90V146H100Z" fill="#2c3c4a"/>
<path d="M110 110C130 108 150 114 170 118L180 146H110Z" fill="#3a4a58"/>
<path d="M198 94C205 90 215 94 220 92L260 90V146H190Z" fill="#2e4454"/>
<path d="M214 36C226 44 240 62 236 84C230 96 220 100 214 108C206 98 194 90 192 76C190 58 202 44 214 36Z" fill="#2a3a2c"/>
<rect x="212" y="96" width="4" height="14" fill="#3a3a30"/>
<ellipse cx="236" cy="136" rx="14" ry="8" fill="#9cd8ec"/>
<ellipse cx="214" cy="140" rx="6" ry="6" fill="#b8e4f0"/>
<ellipse cx="36" cy="142" rx="4" ry="4" fill="#c0e8f4"/>
</svg>
</div>

<!-- J: mountains -->
<div class="tile" style="left:312px;top:926px">
<svg width="260" height="146" viewBox="0 0 260 146">
<defs><linearGradient id="mj1" x1="0" y1="0" x2="0" y2="1"><stop offset="0" stop-color="#f0f2f2"/><stop offset="1" stop-color="#e0e4e6"/></linearGradient>
<linearGradient id="mj2" x1="0" y1="0" x2="0" y2="1"><stop offset="0" stop-color="#6a6e66"/><stop offset="1" stop-color="#b8bcb4"/></linearGradient>
<linearGradient id="mj3" x1="0" y1="0" x2="0" y2="1"><stop offset="0" stop-color="#5e8a3a"/><stop offset="1" stop-color="#8aae52"/></linearGradient></defs>
<rect width="260" height="146" fill="url(#mj1)"/>
<path d="M3 28L20 24L35 20L47 15L58 16L70 28L80 38L95 48L120 60H3Z" fill="url(#mj2)"/>
<path d="M0 30L12 36L30 32L45 29L56 28L68 36L85 48L100 58L112 68L125 78L140 86L120 92H0Z" fill="#545c4a"/>
<path d="M50 52L66 50L80 58L96 70L110 82L90 90L60 86Z" fill="#8a8a78"/>
<path d="M92 46L100 50L112 58L130 66L145 76L130 82L110 74Z" fill="#7a8278" opacity=".8"/>
<path d="M0 30L20 48L40 62L55 75L60 95L0 100Z" fill="#3e5a2c"/>
<path d="M48 62L60 66L75 80L88 90L84 100L68 90Z" fill="#c8642e" opacity=".9"/>
<path d="M150 72L168 52L180 34L195 30L215 31L235 28L250 23L260 26V92L145 92Z" fill="#5e5e50"/>
<path d="M165 66L185 44L205 40L225 50L240 60L255 55L260 60V90L170 90Z" fill="#8e8a74"/>
<path d="M200 70L240 72L260 66V95L200 95Z" fill="#6a6a58"/>
<rect y="86" width="260" height="16" fill="#58624e"/>
<path d="M112 88C125 85 150 84 168 88L170 99H112Z" fill="#d6dce0"/>
<path d="M0 92C40 92 80 96 120 98C160 100 220 90 260 80V146H0Z" fill="#4a6a2e"/>
<path d="M0 108C60 104 150 104 260 100V146H0Z" fill="url(#mj3)"/>
<path d="M195 90L260 60V110L190 105Z" fill="#3a5a28"/>
<path d="M242.6 105.4L248.0 130.0H237.2Z" fill="#34502a"/>
<path d="M46.6 81.8L51.7 105.2H41.4Z" fill="#3a5628"/>
<path d="M196.2 90.4L200.5 110.0H191.9Z" fill="#34502a"/>
<path d="M186.8 103.8L190.5 120.5H183.1Z" fill="#2e4a22"/>
<path d="M12.6 80.1L19.9 113.3H5.3Z" fill="#3a5628"/>
<path d="M146.7 92.5L151.4 113.7H142.0Z" fill="#3a5628"/>
<path d="M203.2 101.0L208.9 127.0H197.5Z" fill="#44602a"/>
<path d="M201.0 90.9L206.2 114.5H195.8Z" fill="#3a5628"/>
<path d="M176.9 94.4L181.8 116.5H172.1Z" fill="#34502a"/>
<path d="M22.0 106.1L27.8 132.6H16.1Z" fill="#3a5628"/>
<path d="M70.8 94.7L75.5 115.8H66.2Z" fill="#44602a"/>
<path d="M56.3 124.8L59.6 139.5H53.1Z" fill="#2e4a22"/>
<path d="M12.5 83.2L19.7 115.6H5.4Z" fill="#2e4a22"/>
<path d="M18.7 100.4L25.0 128.8H12.5Z" fill="#44602a"/>
<path d="M179.1 102.4L184.0 124.5H174.3Z" fill="#3a5628"/>
<path d="M196.3 104.3L199.6 119.4H192.9Z" fill="#2e4a22"/>
<path d="M192.6 109.3L196.3 125.9H188.9Z" fill="#34502a"/>
<path d="M90.6 90.5L95.7 113.6H85.6Z" fill="#3a5628"/>
<path d="M216.5 95.1L220.8 114.6H212.2Z" fill="#34502a"/>
<path d="M207.0 117.6L212.9 144.2H201.2Z" fill="#34502a"/>
<path d="M216.8 104.6L223.7 136.0H209.9Z" fill="#44602a"/>
<path d="M205.2 101.4L211.7 130.5H198.8Z" fill="#44602a"/>
<path d="M115.2 107.6L121.3 135.4H109.1Z" fill="#44602a"/>
<path d="M57.4 92.3L63.9 121.8H50.9Z" fill="#44602a"/>
<path d="M244.4 109.9L249.1 131.0H239.8Z" fill="#44602a"/>
<path d="M122.5 125.0L126.3 142.4H118.6Z" fill="#34502a"/>
<circle cx="186" cy="141" r="1.3" fill="#3a3a2a"/>
<circle cx="118" cy="128" r="1.3" fill="#3a3a2a"/>
<circle cx="65" cy="137" r="1.3" fill="#3a3a2a"/>
<circle cx="181" cy="126" r="1.3" fill="#3a3a2a"/>
<circle cx="144" cy="134" r="1.3" fill="#3a3a2a"/>
<circle cx="150" cy="117" r="1.3" fill="#3a3a2a"/>
<circle cx="157" cy="129" r="1.3" fill="#3a3a2a"/>
<circle cx="140" cy="125" r="1.3" fill="#3a3a2a"/>
<circle cx="134" cy="135" r="1.3" fill="#3a3a2a"/>
<circle cx="136" cy="134" r="1.3" fill="#3a3a2a"/>
<circle cx="44" cy="117" r="1.3" fill="#3a3a2a"/>
<circle cx="106" cy="132" r="1.3" fill="#3a3a2a"/>
<circle cx="73" cy="133" r="1.3" fill="#3a3a2a"/>
<circle cx="135" cy="113" r="1.3" fill="#3a3a2a"/>
<circle cx="111" cy="119" r="1.3" fill="#3a3a2a"/>
<circle cx="48" cy="116" r="1.3" fill="#3a3a2a"/>
<circle cx="88" cy="117" r="1.3" fill="#3a3a2a"/>
<circle cx="69" cy="113" r="1.3" fill="#3a3a2a"/>
<circle cx="110" cy="123" r="1.3" fill="#3a3a2a"/>
<circle cx="132" cy="130" r="1.3" fill="#3a3a2a"/>
<circle cx="76" cy="139" r="1.3" fill="#3a3a2a"/>
<circle cx="40" cy="124" r="1.3" fill="#3a3a2a"/>
<circle cx="82" cy="124" r="1.3" fill="#3a3a2a"/>
<circle cx="57" cy="137" r="1.3" fill="#3a3a2a"/>
<circle cx="96" cy="113" r="1.3" fill="#3a3a2a"/>
<circle cx="132" cy="115" r="1.3" fill="#3a3a2a"/>
<circle cx="122" cy="122" r="1.3" fill="#3a3a2a"/>
<circle cx="127" cy="141" r="1.3" fill="#3a3a2a"/>
<circle cx="163" cy="125" r="1.3" fill="#3a3a2a"/>
<circle cx="162" cy="131" r="1.3" fill="#3a3a2a"/>
</svg>
</div>

<!-- K: canyon -->
<div class="tile" style="left:12px;top:1106px">
<svg width="260" height="146" viewBox="0 0 260 146">
<defs>
<linearGradient id="ck1" x1="0" y1="0" x2="1" y2="0"><stop offset="0" stop-color="#b8703e"/><stop offset=".2" stop-color="#c88450"/><stop offset=".35" stop-color="#a87060"/><stop offset=".5" stop-color="#9a7068"/><stop offset=".62" stop-color="#a88c78"/><stop offset="1" stop-color="#b4a49c"/></linearGradient>
</defs>
<rect width="260" height="146" fill="url(#ck1)"/>
<path d="M0 8C20 5 40 15 50 30L40 40C30 30 15 25 0 30Z" fill="#8a4e2e"/>
<path d="M0 40C15 36 30 44 40 52H0Z" fill="#9a5a36"/>
<path d="M52 0H62C58 20 70 40 80 52H68C56 40 50 20 52 0Z" fill="#6a3a28"/>
<path d="M88 0H104C100 10 96 15 92 20Z" fill="#e07428"/>
<path d="M100 0H150C140 15 125 30 118 52H100C108 35 112 15 100 0Z" fill="#c8a8a8"/>
<path d="M108 10C118 20 120 35 115 52H108Z" fill="#7a5050"/>
<path d="M150 0H260V52H215C200 40 180 30 160 30C155 20 152 10 150 0Z" fill="#b4a090"/>
<path d="M165 5C190 8 220 15 250 20L250 24C220 20 190 14 165 10Z" fill="#6a5a58"/>
<path d="M175 20C200 24 230 30 255 36V40C230 34 200 30 175 25Z" fill="#7a6a66"/>
<path d="M158 34C180 32 200 40 215 52H160Z" fill="#6a3422"/>
<path d="M185 42C195 42 205 46 212 52H190Z" fill="#c06028"/>
</svg>
</div>

<!-- L: nebula -->
<div class="tile" style="left:312px;top:1106px">
<svg width="260" height="146" viewBox="0 0 260 146">
<defs><linearGradient id="nl1" x1="0" y1="0" x2="1" y2="0"><stop offset="0" stop-color="#3a3470"/><stop offset=".1" stop-color="#141a30"/><stop offset=".3" stop-color="#141c34"/><stop offset=".5" stop-color="#4a3a8a"/><stop offset=".62" stop-color="#c850c8"/><stop offset="1" stop-color="#dc5ad8"/></linearGradient></defs>
<rect width="260" height="146" fill="url(#nl1)"/>
<path d="M50 0H150C145 10 135 18 120 20C100 22 80 15 50 12Z" fill="#24806e" opacity=".8"/>
<path d="M140 0H165C160 10 150 20 140 22Z" fill="#40b0b0" opacity=".8"/>
<path d="M0 0H20C25 15 18 35 10 52H0Z" fill="#6a3a90" opacity=".8"/>
<path d="M0 5C8 8 14 14 12 20L0 22Z" fill="#3a8a9a" opacity=".8"/>
<path d="M68 30C80 26 95 32 105 40L100 52H72Z" fill="#b02c98"/>
<path d="M95 26C110 20 130 22 148 30L150 52H100Z" fill="#8a70c0" opacity=".8"/>
<path d="M150 0H260V52H140C150 35 148 15 150 0Z" fill="#de58d6"/>
<path d="M190 20C210 15 230 25 248 30V40C230 35 210 30 190 30Z" fill="#a050c0" opacity=".6"/>
<g fill="#fff"><circle cx="18" cy="6" r="1.2"/><circle cx="48" cy="30" r="1.5"/><circle cx="40" cy="44" r="1.2"/><circle cx="62" cy="14" r="1"/><circle cx="100" cy="12" r="1"/><circle cx="115" cy="12" r="1"/><circle cx="85" cy="22" r="0.9"/><circle cx="2" cy="30" r="1"/><circle cx="195" cy="4" r="1"/></g>
</svg>
</div>
</div>
<div class="a" style="left:2830px;top:340px;width:50px;height:1160px;background:#1f1f1f"></div>
<div class="a" style="left:2838px;top:354px;width:16px;height:295px;border-radius:8px;background:#7a7a7a"></div>

<div class="t" style="left:2336px;top:1518.4px;font-size:24px;letter-spacing:0.65px;line-height:32px;white-space:normal;width:500px">Le altre persone non vedranno il video durante l'anteprima.</div>
<div class="a" style="left:2282px;top:1602px;width:558px;height:64px;border:2px solid #6b6b6b;border-radius:8px;background:#292929"></div>
<div class="t" style="left:2282px;top:1619.75px;width:558px;text-align:center;font-size:29px;letter-spacing:-0.5px;font-weight:bold">Visualizza anteprima</div>
<div class="a" style="left:2282px;top:1686px;width:558px;height:64px;border-radius:8px;background:#4f52b2"></div>
<div class="t" style="left:2282px;top:1703.45px;width:558px;text-align:center;font-size:29px;letter-spacing:-0.55px;font-weight:bold">Applica e abilita il video</div>

<!-- ICONS -->
<svg class="a" style="left:1670px;top:18px" width="60" height="50" viewBox="0 0 60 50" fill="none" stroke="#d6d6d6" stroke-width="3">
<circle cx="21.65" cy="14.8" r="7.3"/><circle cx="39.35" cy="17.3" r="4.8"/>
<path d="M12.4 27.3H30.9A3 3 0 0 1 33.9 30.3V33C33.9 38.5 28.5 42.2 21.65 42.2C14.8 42.2 9.4 38.5 9.4 33V30.3A3 3 0 0 1 12.4 27.3Z"/>
<path d="M37.2 27.3H43.5A3 3 0 0 1 46.5 30.3V32.5C46.5 37 42.5 40.2 36.3 40.5"/>
</svg>
<svg class="a" style="left:1796px;top:18px" width="60" height="50" viewBox="0 0 60 50" fill="none" stroke="#d6d6d6" stroke-width="3" stroke-linejoin="round" stroke-linecap="round">
<path d="M13.3 34.25L11.6 44.2L20.6 42A18.5 18.5 0 1 0 13.3 34.25Z"/>
<path d="M23.2 22.2H36.8M23.2 29.6H31.8"/>
</svg>
<svg class="a" style="left:1908px;top:16px" width="60" height="50" viewBox="0 0 60 50" fill="none" stroke="#d6d6d6" stroke-width="2.8" stroke-linejoin="round" stroke-linecap="round">
<path d="M8.6 26V12.5C8.6 10.2 10.4 8.6 12.5 8.6H13.7C13.9 7.4 15 6.6 16.2 6.6H21.4C22.6 6.6 23.6 7.4 23.8 8.6H24.8C26.9 8.6 28.6 10.3 28.6 12.4V19.8H32.4C34.4 19.8 35.4 22 34 23.4L26 30.8C23.6 33 21.4 34.2 18.4 34.2H15.5C11.5 34.2 8.6 30.5 8.6 26Z"/>
<path d="M13.7 8.6V19.8M18.9 6.6V19.8M23.8 8.6V19.8"/>
<path d="M38.9 21.9A12.3 12.3 0 1 1 24.4 37.6"/>
<path d="M30.9 38.9A6.6 6.6 0 0 0 41.7 38.9"/>
<circle cx="31.8" cy="32.3" r="1.7" fill="#d6d6d6" stroke="none"/><circle cx="40.5" cy="32.3" r="1.7" fill="#d6d6d6" stroke="none"/>
</svg>
<svg class="a" style="left:2020px;top:18px" width="60" height="50" viewBox="0 0 60 50" fill="#d6d6d6">
<circle cx="17.5" cy="26" r="4.4"/><circle cx="29.9" cy="26" r="4.4"/><circle cx="42.5" cy="26" r="4.4"/>
</svg>
<svg class="a" style="left:2166px;top:16px" width="60" height="50" viewBox="0 0 60 50">
<rect x="9.9" y="12.9" width="27.6" height="30.1" rx="5.2" fill="#fff"/>
<path d="M39.9 22.2L46.5 16.9C48.2 15.6 50.1 16.6 50.1 18.7V37.3C50.1 39.4 48.2 40.4 46.5 39.1L39.9 33Z" fill="#fff"/>
<path d="M13.1 7L50.7 45.4" stroke="#232323" stroke-width="2.6"/>
<path d="M11.2 8.9L48.8 47.3" stroke="#fff" stroke-width="2.9" stroke-linecap="round"/>
</svg>
<svg class="a" style="left:2284px;top:16px" width="60" height="50" viewBox="0 0 60 50">
<rect x="22.5" y="7.9" width="15" height="27.5" rx="7.5" fill="#fff"/>
<path d="M17.6 27.7A12.5 12.5 0 0 0 42.6 27.7" fill="none" stroke="#fff" stroke-width="2.9" stroke-linecap="round"/>
<path d="M30.1 40.2V47.3" stroke="#fff" stroke-width="2.9" stroke-linecap="round"/>
<path d="M13 7L50.9 45.1" stroke="#232323" stroke-width="2.6"/>
<path d="M11.1 8.9L49 47" stroke="#fff" stroke-width="2.9" stroke-linecap="round"/>
</svg>
<svg class="a" style="left:2406px;top:16px" width="60" height="50" viewBox="0 0 60 50">
<rect x="9.9" y="12.7" width="40.2" height="30.5" rx="4.6" fill="#fff"/>
<path d="M29.9 37.4V19M23.4 25.5L29.9 19L36.4 25.5" fill="none" stroke="#161616" stroke-width="2.6" stroke-linecap="round" stroke-linejoin="round"/>
</svg>
<svg class="a" style="left:2526px;top:36px" width="60" height="50" viewBox="0 0 60 50">
<path d="M7.8 24.2C7.8 18.5 17 15 28 15C39 15 48 18.5 48 24.2L47.6 28.3C47.3 30.8 45.4 31.9 43.2 31.6L38.2 31C36.3 30.8 35.3 29.8 34.8 28L33.6 23.4C32 22.7 30 22.3 28 22.3C26 22.3 23.8 22.7 22.2 23.4L21 28C20.5 29.8 19.5 30.8 17.6 31L12.6 31.6C10.4 31.9 8.4 30.8 8.1 28.3Z" fill="#fff"/>
</svg>
<svg class="a" style="left:2750px;top:24px" width="90" height="74" viewBox="0 0 90 74">
<path d="M39.4 30.5L50 41L60.6 30.5" fill="none" stroke="#fff" stroke-width="2.5" stroke-linecap="round" stroke-linejoin="round"/>
</svg>
<svg class="a" style="left:2780px;top:160px" width="60" height="50" viewBox="0 0 60 50">
<path d="M16.9 12.7L39.2 35.2M39.2 12.7L16.9 35.2" stroke="#d6d6d6" stroke-width="2" stroke-linecap="round"/>
</svg>
<svg class="a" style="left:2280px;top:260px" width="60" height="60" viewBox="0 0 60 60">
<path d="M33 18V48M18 33H48" stroke="#7f85f5" stroke-width="2.2"/>
</svg>
<svg class="a" style="left:2370px;top:380px" width="180" height="100" viewBox="0 0 180 100">
<circle cx="42" cy="59.9" r="18.5" fill="none" stroke="#fff" stroke-width="3"/>
<path d="M29.6 72.3L54.4 47.5" stroke="#fff" stroke-width="3"/>
</svg>
<svg class="a" style="left:2490px;top:360px" width="60" height="50" viewBox="0 0 60 50">
<path d="M17.2 27.8L24.6 34.7L38.5 20.2" fill="none" stroke="#111" stroke-width="5.5" stroke-linecap="round" stroke-linejoin="round"/>
<path d="M17.2 27.8L24.6 34.7L38.5 20.2" fill="none" stroke="#fff" stroke-width="2.2" stroke-linecap="round" stroke-linejoin="round"/>
</svg>
<svg class="a" style="left:2270px;top:1530px" width="40" height="40" viewBox="0 0 40 40">
<circle cx="24" cy="20" r="11.3" fill="none" stroke="#fff" stroke-width="1.55"/>
<circle cx="24" cy="15" r="1.3" fill="#fff"/>
<path d="M24 18.3V26.2" stroke="#fff" stroke-width="2"/>
</svg>
</body></html>
